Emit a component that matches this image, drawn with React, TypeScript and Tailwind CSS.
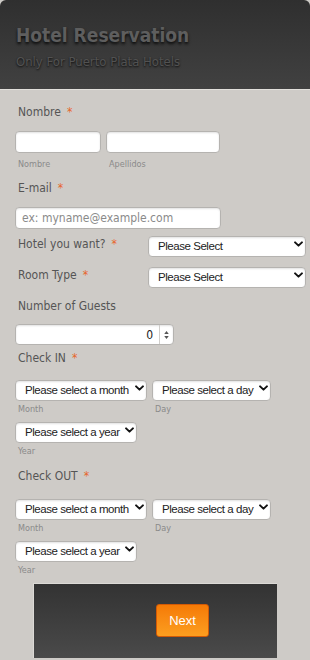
import { ChangeEvent, useState } from 'react'

const labelCls = "text-[12px] leading-[18px] text-[#555] pl-[3px]"
const subCls = "text-[9px] leading-[12px] text-[#8a8a8a]"
const fieldCls =
  "rounded-[4px] border border-[#b5b3b0] bg-white shadow-[inset_0_1px_2px_rgba(0,0,0,0.12)] outline-none"

function Req() {
  return <span className="ml-[6px] text-[#e8652a]">*</span>
}

function Chevron() {
  return (
    <svg viewBox="0 0 10 6" className="pointer-events-none absolute right-[3px] top-1/2 h-[6px] w-[9px] -translate-y-1/2">
      <path d="M1.2 1.2 5 4.8 8.8 1.2" fill="none" stroke="#111" strokeWidth="2.2" strokeLinecap="round" strokeLinejoin="round" />
    </svg>
  )
}

function Select({ text, className }: { text: string; className: string }) {
  return (
    <div className={`relative shrink-0 ${className}`}>
      <select
        className={`${fieldCls} h-full w-full appearance-none pl-[9px] pr-[13px] font-['Liberation_Sans',sans-serif] text-[11.5px] tracking-[-0.45px] text-[#222]`}
        defaultValue=""
      >
        <option value="">{text}</option>
      </select>
      <Chevron />
    </div>
  )
}

function DateGroup({ title, gap }: { title: string; gap: string }) {
  return (
    <>
      <div className={labelCls}>
        {title}
        <Req />
      </div>
      <div className={`${gap} flex gap-[5px]`}>
        <div className="flex flex-col">
          <Select text="Please select a month" className="h-[21px] w-[132px]" />
          <span className={`${subCls} mt-[5px] pl-[3px]`}>Month</span>
        </div>
        <div className="flex flex-col">
          <Select text="Please select a day" className="h-[21px] w-[119px]" />
          <span className={`${subCls} mt-[5px] pl-[3px]`}>Day</span>
        </div>
      </div>
      <Select text="Please select a year" className="mt-[4px] h-[21px] w-[122px]" />
      <span className={`${subCls} mt-[5px] pl-[3px]`}>Year</span>
    </>
  )
}

export default function App() {
  const [guests, setGuests] = useState('0')

  return (
    <div className="min-h-screen bg-[#cecbc7] font-['DejaVu_Sans_Condensed','Liberation_Sans',sans-serif]">
      {/* Header */}
      <div className="h-[90px] rounded-t-[6px] border-b border-[#e2e0dc] bg-linear-to-b from-[#2f2f2f] to-[#414141] px-4 pt-[23px]">
        <h1 className="text-[19px] font-bold leading-6 text-[#5e5e5e] [text-shadow:0_2px_3px_#0a0a0a]">
          Hotel Reservation
        </h1>
        <p className="mt-[7px] text-[13px] leading-4 text-[#525252] [text-shadow:0_1px_2px_#0a0a0a]">
          Only For Puerto Plata Hotels
        </p>
      </div>

      {/* Form */}
      <div className="flex flex-col px-[15px] pt-[13px]">
        <div className={labelCls}>
          Nombre
          <Req />
        </div>
        <div className="mt-[10px] flex gap-[5px]">
          <div className="flex flex-col">
            <input className={`${fieldCls} h-[22px] w-[86px]`} />
            <span className={`${subCls} mt-[5px] pl-[3px]`}>Nombre</span>
          </div>
          <div className="flex flex-col">
            <input className={`${fieldCls} h-[22px] w-[114px]`} />
            <span className={`${subCls} mt-[5px] pl-[3px]`}>Apellidos</span>
          </div>
        </div>

        <div className={`${labelCls} mt-[9px]`}>
          E-mail
          <Req />
        </div>
        <input
          className={`${fieldCls} mt-[10px] h-[22px] w-[206px] px-[6px] text-[12px] text-[#333] placeholder:text-[#8a8a8a]`}
          placeholder="ex: myname@example.com"
        />

        <div className="mt-[4px] flex h-[21px] items-center">
          <div className={`${labelCls} w-[133px] shrink-0`}>
            Hotel you want?
            <Req />
          </div>
          <Select text="Please Select" className="h-[21px] w-[158px]" />
        </div>
        <div className="mt-[10px] flex h-[21px] items-center">
          <div className={`${labelCls} w-[133px] shrink-0`}>
            Room Type
            <Req />
          </div>
          <Select text="Please Select" className="h-[21px] w-[158px]" />
        </div>

        <div className={`${labelCls} mt-[12px]`}>Number of Guests</div>
        <div className={`${fieldCls} mt-[9px] flex h-[21px] w-[159px] items-stretch overflow-hidden`}>
          <input
            value={guests}
            onChange={(e: ChangeEvent<HTMLInputElement>) => setGuests(e.target.value)}
            className="min-w-0 flex-1 bg-transparent pr-[6px] text-right text-[12px] text-[#222] outline-none"
          />
          <div className="flex w-[14px] flex-col items-center justify-center gap-[2px] border-l border-[#d0cecb]">
            <svg viewBox="0 0 6 4" className="h-[3px] w-[5px]">
              <path d="M0 4 3 0 6 4z" fill="#555" />
            </svg>
            <svg viewBox="0 0 6 4" className="h-[3px] w-[5px]">
              <path d="M0 0 3 4 6 0z" fill="#555" />
            </svg>
          </div>
        </div>

        <div className="mt-[4px] flex flex-col">
          <DateGroup title="Check IN" gap="mt-[10px]" />
        </div>
        <div className="mt-[10px] flex flex-col">
          <DateGroup title="Check OUT" gap="mt-[11px]" />
        </div>
      </div>

      {/* Footer */}
      <div className="mx-[33px] mt-[7px] h-[75px] border-t border-l border-[#dcdad6] bg-linear-to-b from-[#333333] to-[#4a4a4a] pl-[122px] pt-[20px]">
        <button
          type="button"
          className="h-[33px] w-[53px] rounded-[3px] border border-[#d35a05] bg-linear-to-b from-[#f57a05] to-[#fc9e1f] font-['Liberation_Sans',sans-serif] text-[13px] text-white"
        >
          Next
        </button>
      </div>
    </div>
  )
}
